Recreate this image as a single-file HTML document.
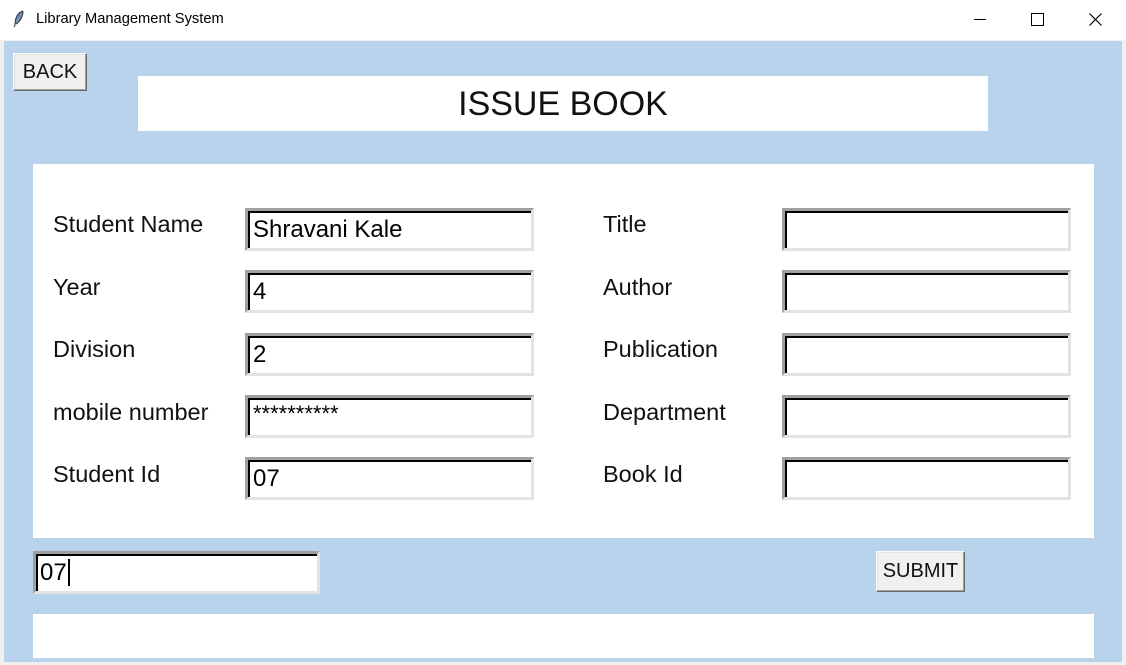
<!DOCTYPE html><html><head><style>
body{margin:0;width:1126px;height:665px;background:#f0f0f0;position:relative;overflow:hidden;font-family:"Liberation Sans",Arial,sans-serif}
.a{position:absolute;box-sizing:border-box}
.tb{left:0;top:0;width:1126px;height:40px;background:#fff;font-size:14.7px}
.blue{left:4px;top:41px;width:1118px;height:621px;background:#b9d3ed}
.w{background:#fff}
.btn{background:#f0f0f0;border:1px solid;border-color:#fff #696969 #696969 #fff;box-shadow:inset -1px -1px 0 #a0a0a0,inset 1px 1px 0 #e3e3e3;font-size:20px;display:flex;align-items:center;justify-content:center;color:#111}
.e{background:#fff;border-top:3px solid #a0a0a0;border-left:3px solid #a0a0a0;border-right:3px solid #e3e3e3;border-bottom:3px solid #e3e3e3;box-shadow:inset 2px 2px 0 #000;font-size:24px;padding:5px 0 0 5px;color:#000;line-height:28px}
.l{font-size:23.5px;color:#111}
</style></head><body>
<div class="a tb"><svg style="position:absolute;left:13px;top:10px" width="12" height="18"><path d="M10 1 C4 3 2 9 2 15 L1 17 M3 14 C7 12 10 6 10 1" stroke="#333" fill="#6a8ab0" stroke-width="1"/></svg><span style="position:absolute;left:36px;top:11px">Library Management System</span>
<div style="position:absolute;left:974px;top:19px;width:12px;height:1px;background:#000"></div>
<div style="position:absolute;left:1031px;top:13px;width:11px;height:11px;border:1px solid #000"></div>
<svg style="position:absolute;left:1089px;top:13px" width="13" height="13"><path d="M0.5 0.5L12.5 12.5M12.5 0.5L0.5 12.5" stroke="#000" stroke-width="1.2"/></svg></div>
<div class="a blue"></div>
<div class="a btn" style="left:13px;top:53px;width:74px;height:38px">BACK</div>
<div class="a w" style="left:138px;top:76px;width:850px;height:55px;font-size:34px;text-align:center;line-height:57px;color:#111">ISSUE BOOK</div>
<div class="a w" style="left:33px;top:164px;width:1061px;height:374px"></div>
<div class="a l" style="left:53px;top:211px">Student Name</div>
<div class="a l" style="left:53px;top:274px">Year</div>
<div class="a l" style="left:53px;top:336px">Division</div>
<div class="a l" style="left:53px;top:399px">mobile number</div>
<div class="a l" style="left:53px;top:461px">Student Id</div>
<div class="a l" style="left:603px;top:211px">Title</div>
<div class="a l" style="left:603px;top:274px">Author</div>
<div class="a l" style="left:603px;top:336px">Publication</div>
<div class="a l" style="left:603px;top:399px">Department</div>
<div class="a l" style="left:603px;top:461px">Book Id</div>
<div class="a e" style="left:245px;top:208px;width:289px;height:43px">Shravani Kale</div>
<div class="a e" style="left:245px;top:270px;width:289px;height:43px">4</div>
<div class="a e" style="left:245px;top:333px;width:289px;height:43px">2</div>
<div class="a e" style="left:245px;top:395px;width:289px;height:43px;line-height:22px;font-size:22px">**********</div>
<div class="a e" style="left:245px;top:457px;width:289px;height:43px">07</div>
<div class="a e" style="left:782px;top:208px;width:289px;height:43px"></div>
<div class="a e" style="left:782px;top:270px;width:289px;height:43px"></div>
<div class="a e" style="left:782px;top:333px;width:289px;height:43px"></div>
<div class="a e" style="left:782px;top:395px;width:289px;height:43px"></div>
<div class="a e" style="left:782px;top:457px;width:289px;height:43px"></div>
<div class="a e" style="left:33px;top:551px;width:287px;height:43px;padding-left:4px">07<span style="border-left:2px solid #000;margin-left:1px"></span></div>
<div class="a btn" style="left:876px;top:551px;width:89px;height:41px">SUBMIT</div>
<div class="a w" style="left:33px;top:614px;width:1061px;height:44px"></div>
</body></html>
